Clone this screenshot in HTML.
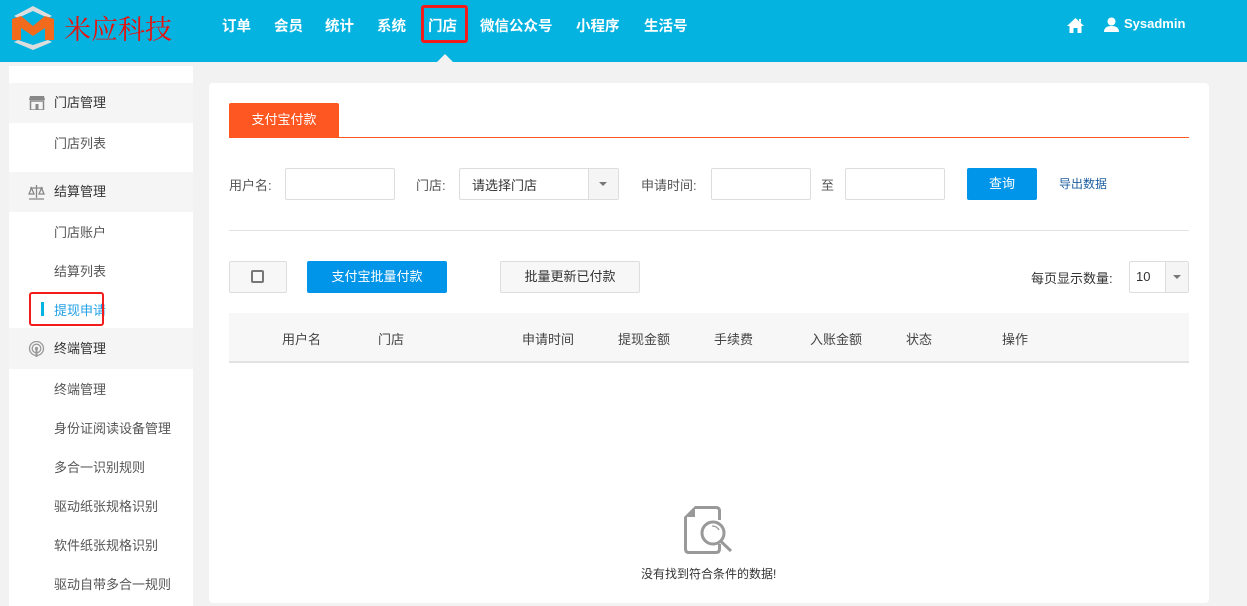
<!DOCTYPE html>
<html><head><meta charset="utf-8"><style>
*{margin:0;padding:0;box-sizing:border-box}
body{width:1247px;height:594px;overflow:hidden;background:#f2f2f2;font-family:"Liberation Sans","Noto Sans CJK SC",sans-serif;font-size:13px;color:#333;position:relative}
.abs{position:absolute}
.hdr{left:0;top:0;width:1247px;height:62px;background:#05b3e0}
.nav{top:15px;color:#fff;font-size:14.5px;font-weight:bold}
.side{left:9px;top:66px;width:184px;height:540px;background:#fff}
.grp{left:9px;width:184px;height:40px;background:#f5f5f5;color:#333;font-size:13px;line-height:40px;padding-left:45px}
.it{left:54px;font-size:13px;color:#555}
.card{left:209px;top:83px;width:1000px;height:520px;background:#fff;border-radius:4px}
.inp{border:1px solid #ddd;border-radius:2px;background:#fff;height:32px}
.lbl{font-size:13px;color:#555}
.th{top:329px;font-size:13px;color:#444}
</style></head><body>
<div class="abs hdr"></div>
<svg class="abs" style="left:10px;top:4px" width="46" height="46" viewBox="0 0 46 46">
<path d="M23 2 L42 12 L38 14 L23 7 L8 14 L4 12 Z" fill="#ddd"/>
<path d="M2 15 L11 12 L23 22 L35 12 L44 15 L44 36 L35 36 L35 24 L23 32 L11 24 L11 36 L2 36 Z" fill="#f26b1d"/>
<path d="M4 38 L23 46 L42 38 L38 36 L23 41 L8 36 Z" fill="#ddd"/>
</svg>
<div class="abs" style="left:64px;top:8px;color:#e8120c;font-family:'Liberation Serif','Noto Serif CJK SC',serif;font-size:27px;letter-spacing:0px">米应科技</div>
<div class="abs nav" style="left:222px">订单</div>
<div class="abs nav" style="left:274px">会员</div>
<div class="abs nav" style="left:325px">统计</div>
<div class="abs nav" style="left:377px">系统</div>
<div class="abs nav" style="left:428px">门店</div>
<div class="abs nav" style="left:480px">微信公众号</div>
<div class="abs nav" style="left:576px">小程序</div>
<div class="abs nav" style="left:644px">生活号</div>
<div class="abs" style="left:421px;top:5px;width:47px;height:38px;border:3px solid #f21c1c;border-radius:3px"></div>
<div class="abs" style="left:437px;top:54px;width:0;height:0;border-left:8px solid transparent;border-right:8px solid transparent;border-bottom:8px solid #f2f2f2"></div>
<svg class="abs" style="left:1067px;top:18px" width="17" height="15" viewBox="0 0 17 15"><path d="M8.5 0 L17 8 L14.5 8 L14.5 15 L10.5 15 L10.5 10 L6.5 10 L6.5 15 L2.5 15 L2.5 8 L0 8 Z M12 1 h2 v4 l-2 -2z" fill="#fff"/></svg>
<svg class="abs" style="left:1104px;top:17px" width="15" height="15" viewBox="0 0 15 15"><circle cx="7.5" cy="4.5" r="4" fill="#fff"/><path d="M0 15 Q0 9 7.5 9 Q15 9 15 15 Z" fill="#fff"/></svg>
<div class="abs" style="left:1124px;top:16px;color:#fff;font-weight:bold;font-size:13px">Sysadmin</div>

<div class="abs side"></div>
<div class="abs grp" style="top:83px">门店管理</div>
<svg class="abs" style="left:29px;top:96px" width="16" height="14" viewBox="0 0 16 14"><path d="M1 0h14l1 4H0z" fill="#888"/><rect x="1.5" y="5" width="13" height="9" fill="none" stroke="#888" stroke-width="1.5"/><rect x="6.5" y="8" width="3" height="6" fill="#888"/></svg>
<div class="abs it" style="top:133px">门店列表</div>
<div class="abs grp" style="top:172px">结算管理</div>
<svg class="abs" style="left:28px;top:185px" width="17" height="15" viewBox="0 0 17 15"><path d="M8.5 0v13M1 14h15M2 3h13M3.5 3l-2.5 6h5zM13.5 3l-2.5 6h5z" stroke="#888" stroke-width="1.3" fill="none"/></svg>
<div class="abs it" style="top:222px">门店账户</div>
<div class="abs it" style="top:261px">结算列表</div>
<div class="abs" style="left:41px;top:302px;width:3px;height:14px;background:#05b3e0"></div>
<div class="abs it" style="top:300px;color:#1e9fe6">提现申请</div>
<div class="abs" style="left:29px;top:292px;width:75px;height:34px;border:2px solid #f21c1c;border-radius:3px"></div>
<div class="abs grp" style="top:328px;height:41px;line-height:41px">终端管理</div>
<svg class="abs" style="left:28px;top:341px" width="17" height="16" viewBox="0 0 17 16"><circle cx="8.5" cy="7.5" r="7" stroke="#999" stroke-width="1.3" fill="none"/><circle cx="8.5" cy="7.5" r="4.3" stroke="#999" stroke-width="1.3" fill="none"/><circle cx="8.5" cy="7.5" r="1.6" fill="#999"/><rect x="7.5" y="8" width="2" height="8" fill="#999"/></svg>
<div class="abs it" style="top:379px">终端管理</div>
<div class="abs it" style="top:418px">身份证阅读设备管理</div>
<div class="abs it" style="top:457px">多合一识别规则</div>
<div class="abs it" style="top:496px">驱动纸张规格识别</div>
<div class="abs it" style="top:535px">软件纸张规格识别</div>
<div class="abs it" style="top:574px">驱动自带多合一规则</div>

<div class="abs card"></div>
<div class="abs" style="left:229px;top:103px;width:110px;height:34px;background:#ff5722;border-radius:2px 2px 0 0;color:#fff;font-size:13px;line-height:34px;text-align:center">支付宝付款</div>
<div class="abs" style="left:229px;top:137px;width:960px;height:1px;background:#ff5722"></div>
<div class="abs lbl" style="left:229px;top:175px">用户名:</div>
<div class="abs inp" style="left:285px;top:168px;width:110px"></div>
<div class="abs lbl" style="left:416px;top:175px">门店:</div>
<div class="abs inp" style="left:459px;top:168px;width:160px"></div>
<div class="abs" style="left:588px;top:169px;width:30px;height:30px;background:#f5f5f5;border-left:1px solid #ddd"></div>
<div class="abs" style="left:599px;top:182px;border-left:4px solid transparent;border-right:4px solid transparent;border-top:4px solid #777"></div>
<div class="abs" style="left:472px;top:175px;font-size:13px;color:#333">请选择门店</div>
<div class="abs lbl" style="left:641px;top:175px">申请时间:</div>
<div class="abs inp" style="left:711px;top:168px;width:100px"></div>
<div class="abs lbl" style="left:821px;top:175px">至</div>
<div class="abs inp" style="left:845px;top:168px;width:100px"></div>
<div class="abs" style="left:967px;top:168px;width:70px;height:32px;background:#0095e8;border-radius:2px;color:#fff;line-height:32px;text-align:center">查询</div>
<div class="abs" style="left:1059px;top:175px;font-size:12px;color:#1f5fa0">导出数据</div>
<div class="abs" style="left:229px;top:230px;width:960px;height:1px;background:#e2e2e2"></div>
<div class="abs" style="left:229px;top:261px;width:58px;height:32px;border:1px solid #ddd;background:#f7f7f7;border-radius:2px"></div>
<div class="abs" style="left:251px;top:270px;width:13px;height:13px;border:2px solid #777;border-radius:2px"></div>
<div class="abs" style="left:307px;top:261px;width:140px;height:32px;background:#0095e8;border-radius:2px;color:#fff;line-height:32px;text-align:center">支付宝批量付款</div>
<div class="abs" style="left:500px;top:261px;width:140px;height:32px;border:1px solid #ddd;background:#f7f7f7;border-radius:2px;line-height:30px;text-align:center;color:#333">批量更新已付款</div>
<div class="abs lbl" style="left:1031px;top:268px;color:#333">每页显示数量:</div>
<div class="abs inp" style="left:1129px;top:261px;width:60px"></div>
<div class="abs" style="left:1165px;top:262px;width:23px;height:30px;background:#f5f5f5;border-left:1px solid #ddd"></div>
<div class="abs" style="left:1173px;top:275px;border-left:4px solid transparent;border-right:4px solid transparent;border-top:4px solid #777"></div>
<div class="abs" style="left:1136px;top:269px;color:#333">10</div>
<div class="abs" style="left:229px;top:313px;width:960px;height:50px;background:#f7f7f7;border-bottom:2px solid #e2e2e2"></div>
<div class="abs th" style="left:282px">用户名</div>
<div class="abs th" style="left:378px">门店</div>
<div class="abs th" style="left:522px">申请时间</div>
<div class="abs th" style="left:618px">提现金额</div>
<div class="abs th" style="left:714px">手续费</div>
<div class="abs th" style="left:810px">入账金额</div>
<div class="abs th" style="left:906px">状态</div>
<div class="abs th" style="left:1002px">操作</div>
<svg class="abs" style="left:684px;top:505px" width="50" height="50" viewBox="0 0 50 50">
<path d="M11 2.5 H32 Q35.5 2.5 35.5 6 V15" fill="none" stroke="#999" stroke-width="3"/>
<path d="M35.5 39 V44 Q35.5 47.5 32 47.5 H5 Q1.5 47.5 1.5 44 V12" fill="none" stroke="#999" stroke-width="3"/>
<path d="M0 12 L11 1 L11 12 Z" fill="#999"/>
<circle cx="29" cy="28" r="11" fill="none" stroke="#999" stroke-width="3"/>
<path d="M37 36.5 L47 46" stroke="#999" stroke-width="3"/>
<path d="M28 21 Q33 21 35 25" stroke="#999" stroke-width="1.3" fill="none"/>
</svg>
<div class="abs" style="left:641px;top:565px;font-size:12px;color:#333">没有找到符合条件的数据!</div>
</body></html>
